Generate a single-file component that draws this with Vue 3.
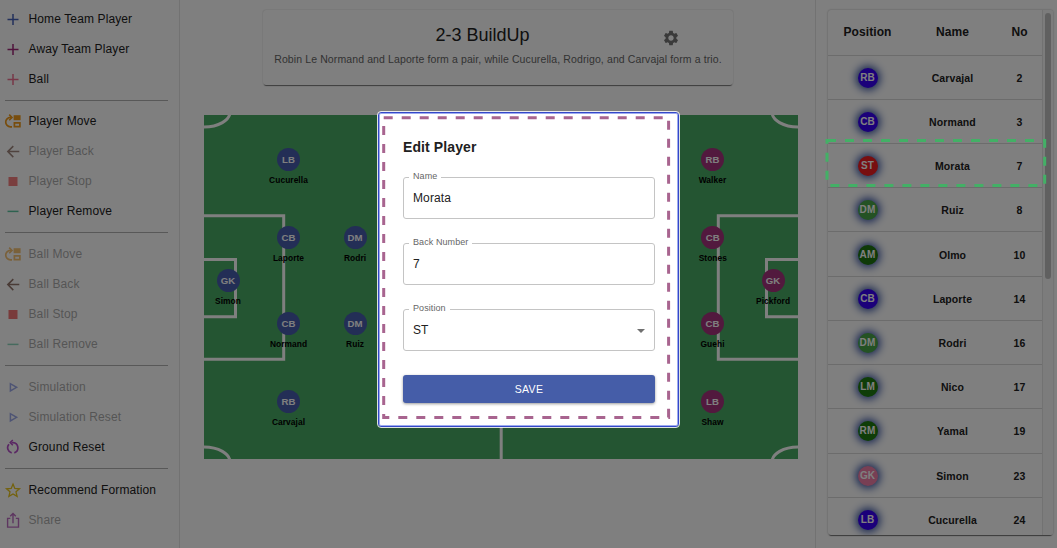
<script setup>
const groups = [
  [
    { icon: 'plus', color: '#4460b8', label: 'Home Team Player' },
    { icon: 'plus', color: '#a02678', label: 'Away Team Player' },
    { icon: 'plus', color: '#ee6f90', label: 'Ball' },
  ],
  [
    { icon: 'move', color: '#f09a1a', label: 'Player Move' },
    { icon: 'back', color: '#795548', label: 'Player Back', off: true, fade: 0.7 },
    { icon: 'stop', color: '#f04a4a', label: 'Player Stop', off: true, fade: 0.7 },
    { icon: 'minus', color: '#5cc4a0', label: 'Player Remove' },
  ],
  [
    { icon: 'move', color: '#f09a1a', label: 'Ball Move', off: true, fade: 0.6 },
    { icon: 'back', color: '#795548', label: 'Ball Back', off: true, fade: 0.8 },
    { icon: 'stop', color: '#f04a4a', label: 'Ball Stop', off: true, fade: 0.75 },
    { icon: 'minus', color: '#5cc4a0', label: 'Ball Remove', off: true, fade: 0.7 },
  ],
  [
    { icon: 'play', color: '#7385e0', label: 'Simulation', off: true, fade: 0.7 },
    { icon: 'play', color: '#7385e0', label: 'Simulation Reset', off: true, fade: 0.7 },
    { icon: 'reset', color: '#b44fc8', label: 'Ground Reset' },
  ],
  [
    { icon: 'star', color: '#e8c41c', label: 'Recommend Formation' },
    { icon: 'share', color: '#a030a8', label: 'Share', off: true, fade: 0.7 },
  ],
]

const players = [
  { x: 85, y: 44, pos: 'LB', name: 'Cucurella' },
  { x: 85, y: 122.6, pos: 'CB', name: 'Laporte' },
  { x: 151.6, y: 122.6, pos: 'DM', name: 'Rodri' },
  { x: 24.5, y: 165.5, pos: 'GK', name: 'Simon' },
  { x: 85, y: 208.4, pos: 'CB', name: 'Normand' },
  { x: 151.6, y: 208.4, pos: 'DM', name: 'Ruiz' },
  { x: 85, y: 286.4, pos: 'RB', name: 'Carvajal' },
  { x: 509, y: 44, pos: 'RB', name: 'Walker', away: true },
  { x: 509.3, y: 122.6, pos: 'CB', name: 'Stones', away: true },
  { x: 569.6, y: 165.5, pos: 'GK', name: 'Pickford', away: true },
  { x: 509, y: 208.4, pos: 'CB', name: 'Guehi', away: true },
  { x: 509, y: 286.4, pos: 'LB', name: 'Shaw', away: true },
]

const squad = [
  { pos: 'RB', name: 'Carvajal', no: 2, kind: 'df' },
  { pos: 'CB', name: 'Normand', no: 3, kind: 'df' },
  { pos: 'ST', name: 'Morata', no: 7, kind: 'fw' },
  { pos: 'DM', name: 'Ruiz', no: 8, kind: 'dm' },
  { pos: 'AM', name: 'Olmo', no: 10, kind: 'am' },
  { pos: 'CB', name: 'Laporte', no: 14, kind: 'df' },
  { pos: 'DM', name: 'Rodri', no: 16, kind: 'dm' },
  { pos: 'LM', name: 'Nico', no: 17, kind: 'mf' },
  { pos: 'RM', name: 'Yamal', no: 19, kind: 'mf' },
  { pos: 'GK', name: 'Simon', no: 23, kind: 'gk' },
  { pos: 'LB', name: 'Cucurella', no: 24, kind: 'df' },
]
</script>

<template>
  <div class="screen">
    <aside class="side">
      <ul v-for="(g, gi) in groups" :key="gi" class="group">
        <li v-for="it in g" :key="it.label" class="item" :class="{ off: it.off }">
          <svg
            class="ico"
            viewBox="0 0 18 18"
            fill="none"
            :stroke="it.color"
            stroke-width="1.5"
            :style="{ opacity: it.fade || 1 }"
          >
            <path v-if="it.icon === 'plus'" d="M3.5 9.4h11M9 3.9v11" />
            <path v-else-if="it.icon === 'minus'" d="M3.5 9.4h11" />
            <g v-else-if="it.icon === 'move'">
              <path d="M8 14.8H6.4a4.7 4.7 0 0 1 0-9.4H8" stroke-width="1.7" />
              <path d="M5.2 2.6L8 5.4 5.2 8.2" stroke-width="1.6" />
              <path d="M9.6 3.2h7v5h-7z" :fill="it.color" stroke="none" />
              <path d="M10.4 10.9h5.5v3.7h-5.5z" stroke-width="1.7" />
            </g>
            <path v-else-if="it.icon === 'back'" d="M15.3 9.6H4M9.3 4.1L3.8 9.6l5.5 5.5" />
            <path v-else-if="it.icon === 'stop'" d="M4.5 5h9v9h-9z" :fill="it.color" stroke="none" />
            <path v-else-if="it.icon === 'play'" d="M6.4 5.7v7.2l6.2-3.6z" stroke-width="1.5" />
            <g v-else-if="it.icon === 'reset'">
              <path d="M7.4 4.6H9A5.3 5.3 0 0 1 10.3 14.9" stroke-width="1.7" />
              <path d="M5 6.2A5.3 5.3 0 0 0 7.7 14.9" stroke-width="1.7" />
              <path d="M8.8 1.9L6.2 4.6l2.6 2.7" stroke-width="1.5" />
            </g>
            <path
              v-else-if="it.icon === 'star'"
              d="M9 3.1l1.8 4.3 4.7.4-3.5 3 1.1 4.6L9 13l-4.1 2.4L6 10.8l-3.5-3 4.7-.4z"
              stroke-width="1.3"
            />
            <path
              v-else
              d="M6.3 7.4H3.6v8.7h10.9V7.4h-2.7M9 12.2V2.7M6.2 5.2L9 2.4l2.8 2.8"
              stroke-width="1.4"
            />
          </svg>
          <span class="lbl">{{ it.label }}</span>
        </li>
      </ul>
    </aside>

    <main class="main">
      <section class="card">
        <div class="head">
          <h1>2-3 BuildUp</h1>
          <svg class="gear" viewBox="0 0 24 24">
            <path
              fill="#757575"
              d="M19.14 12.94c.04-.3.06-.61.06-.94 0-.32-.02-.64-.07-.94l2.03-1.58c.18-.14.23-.41.12-.61l-1.92-3.32c-.12-.22-.37-.29-.59-.22l-2.39.96c-.5-.38-1.03-.7-1.62-.94l-.36-2.54c-.04-.24-.24-.41-.48-.41h-3.84c-.24 0-.43.17-.47.41l-.36 2.54c-.59.24-1.13.57-1.62.94l-2.39-.96c-.22-.08-.47 0-.59.22L2.74 8.87c-.12.21-.08.47.12.61l2.03 1.58c-.05.3-.09.63-.09.94s.02.64.07.94l-2.03 1.58c-.18.14-.23.41-.12.61l1.92 3.32c.12.22.37.29.59.22l2.39-.96c.5.38 1.03.7 1.62.94l.36 2.54c.05.24.24.41.48.41h3.84c.24 0 .44-.17.47-.41l.36-2.54c.59-.24 1.13-.56 1.62-.94l2.39.96c.22.08.47 0 .59-.22l1.92-3.32c.12-.22.07-.47-.12-.61l-2.01-1.58zM12 15.6c-1.98 0-3.6-1.62-3.6-3.6s1.62-3.6 3.6-3.6 3.6 1.62 3.6 3.6-1.62 3.6-3.6 3.6z"
            />
          </svg>
        </div>
        <p>Robin Le Normand and Laporte form a pair, while Cucurella, Rodrigo, and Carvajal form a trio.</p>
      </section>

      <section class="pitch">
        <svg class="lines" viewBox="0 0 594 344" fill="none" stroke="#fff" stroke-width="3">
          <path d="M0 100.7h79.7v143.6H0M0 144.5h31.5v57.3H0" />
          <path d="M594 100.7h-79.7v143.6H594M594 144.5h-31.5v57.3H594" />
          <path d="M297.2 0v344" />
          <circle cx="297" cy="172" r="50" />
          <ellipse cx="0" cy="-3" rx="26" ry="15" />
          <ellipse cx="594" cy="-3" rx="26" ry="15" />
          <ellipse cx="0" cy="347" rx="26" ry="15" />
          <ellipse cx="594" cy="347" rx="26" ry="15" />
        </svg>
        <div
          v-for="p in players"
          :key="p.name"
          class="player"
          :class="{ away: p.away }"
          :style="{ left: p.x + 'px', top: p.y + 'px' }"
        >
          <b>{{ p.pos }}</b>
          <span>{{ p.name }}</span>
        </div>
      </section>
    </main>

    <aside class="right">
      <div class="panel">
        <div class="table">
          <div class="row th"><span>Position</span><span>Name</span><span>No</span></div>
          <div v-for="s in squad" :key="s.name" class="row">
            <span><i class="av" :class="s.kind">{{ s.pos }}</i></span>
            <span>{{ s.name }}</span>
            <span>{{ s.no }}</span>
          </div>
        </div>
        <div class="track"><div class="thumb"></div></div>
      </div>
    </aside>

    <div class="backdrop">
      <form class="modal" @submit.prevent>
        <h2>Edit Player</h2>
        <div class="field"><label>Name</label>Morata</div>
        <div class="field"><label>Back Number</label>7</div>
        <div class="field">
          <label>Position</label>ST
          <svg class="caret" viewBox="0 0 8 4"><path d="M0 0h8L4 4z" fill="#707070" /></svg>
        </div>
        <button>SAVE</button>
      </form>
    </div>

    <svg class="marks" viewBox="0 0 1057 548" fill="none" stroke-width="3" stroke-dasharray="9 9">
      <path d="M383.7 117.7H668.6V417.5H383.7Z" stroke="#a8648f" />
      <path d="M827 140.4H1044.7V185.4H827Z" stroke="#43b066" />
    </svg>
  </div>
</template>

<style>
body {
  margin: 0;
  overflow: hidden;
}
</style>

<style scoped>
* {
  box-sizing: border-box;
}
.screen {
  position: relative;
  display: flex;
  width: 1057px;
  height: 548px;
  overflow: hidden;
  background: #fff;
  color: #212121;
  font-family: "Liberation Sans", Arial, sans-serif;
}
.side {
  width: 180px;
  border-right: 1px solid #e4e4e4;
  padding: 3.5px 11px 0 5px;
}
.group {
  list-style: none;
  margin: 0;
  padding: 0;
}
.group + .group {
  margin-top: 6.2px;
  padding-top: 5.6px;
  border-top: 1px solid #b0b0b0;
}
.item {
  display: flex;
  align-items: center;
  height: 30px;
  font-size: 12px;
  letter-spacing: 0.12px;
  white-space: nowrap;
}
.ico {
  width: 18px;
  height: 18px;
  margin: 0 6.5px 0 -1px;
  flex: none;
}
.off .lbl {
  opacity: 0.38;
}
.main {
  width: 635px;
  display: flex;
  flex-direction: column;
  align-items: center;
  padding-top: 10px;
}
.card {
  width: 470px;
  height: 75px;
  margin-left: 1px;
  border-radius: 3px;
  box-shadow: 0 1.5px 1px -1px rgba(0, 0, 0, 0.5), 0 0 1.5px rgba(0, 0, 0, 0.25);
}
.head {
  display: grid;
  grid-template-columns: 172.5px auto 1fr;
  align-items: center;
  padding-top: 13px;
  height: 38px;
}
h1 {
  grid-column: 2;
  margin: 0 30px 4px 0;
  font-size: 18px;
  font-weight: 400;
  line-height: 24px;
}
.gear {
  grid-column: 3;
  width: 18px;
  height: 18px;
  margin: 2px 0 0 102px;
}
p {
  margin: 4px 0 0;
  text-align: center;
  font-size: 10.5px;
  line-height: 15px;
  letter-spacing: 0.112px;
  color: #666;
  white-space: nowrap;
}
.pitch {
  position: relative;
  width: 594px;
  height: 344px;
  margin: 30px 0 0 6px;
  background: #48aa64;
}
.lines {
  display: block;
  width: 594px;
  height: 344px;
}
.player {
  position: absolute;
  width: 80px;
  margin: -11.5px 0 0 -40px;
  display: flex;
  flex-direction: column;
  align-items: center;
}
.player b {
  width: 23px;
  height: 23px;
  border-radius: 50%;
  background: #465cac;
  color: #fff;
  font-size: 9.6px;
  line-height: 23px;
  text-align: center;
  letter-spacing: 0.1px;
}
.player.away b {
  background: #a4327c;
}
.player span {
  margin-top: 4px;
  color: #000;
  font-size: 8.4px;
  font-weight: 700;
  line-height: 10px;
  letter-spacing: 0.07px;
}
.right {
  flex: 1;
  border-left: 1px solid #e4e4e4;
  padding: 10px 4px 0 11.5px;
}
.panel {
  display: flex;
  height: 525px;
  overflow: hidden;
  border-radius: 3px;
  box-shadow: 0 1.5px 1px -1px rgba(0, 0, 0, 0.5), 0 0 2px rgba(0, 0, 0, 0.35);
}
.table {
  width: 214px;
}
.row {
  display: grid;
  grid-template-columns: 80px 90px 44px;
  align-items: center;
  height: 44.22px;
  padding-top: 1px;
  border-bottom: 1px solid #d8d8d8;
  text-align: center;
  font-size: 10.5px;
  font-weight: 700;
  letter-spacing: 0.1px;
}
.row.th {
  height: 45.6px;
  padding-top: 0;
  font-size: 12px;
}
.av {
  display: block;
  width: 20px;
  height: 20px;
  margin: 0 auto;
  border-radius: 50%;
  color: #fff;
  font-size: 10px;
  font-style: normal;
  line-height: 20px;
  letter-spacing: 0.1px;
  box-shadow: 0 0 8px 2px #2a489f;
}
.df { background: #3600f4; }
.fw { background: #f01c20; }
.dm { background: #48a548; }
.am { background: #1e7410; }
.mf { background: #1f7a10; }
.gk { background: #f07fa8; }
.track {
  flex: 1;
  padding: 2.5px 0 0 2px;
  background: #f9f9f9;
  border-left: 1px solid #e4e4e4;
}
.thumb {
  width: 6px;
  height: 266px;
  border-radius: 3px;
  background: #c1c1c1;
}
.backdrop {
  position: absolute;
  inset: 0;
  background: rgba(0, 0, 0, 0.5);
  display: flex;
  align-items: flex-start;
  justify-content: center;
}
.modal {
  width: 301px;
  height: 315px;
  margin-top: 112px;
  padding: 24px 23px 0 24px;
  border: 1px solid #3448c8;
  border-radius: 3px;
  background: #fff;
  outline: 1px solid rgba(255, 255, 255, 0.85);
  box-shadow: inset 0 0 0 1px rgba(60, 85, 225, 0.5);
}
h2 {
  margin: 0;
  font-size: 14px;
  line-height: 20px;
  letter-spacing: 0.1px;
}
.field {
  position: relative;
  height: 42px;
  margin-top: 24px;
  padding-left: 9px;
  border: 1px solid #c4c4c4;
  border-radius: 3px;
  font-size: 12px;
  line-height: 40px;
  letter-spacing: 0.11px;
}
h2 + .field {
  margin-top: 20px;
}
.field label {
  position: absolute;
  left: 5px;
  top: -8px;
  padding: 0 4px;
  background: #fff;
  color: #666;
  font-size: 9px;
  line-height: 12px;
  letter-spacing: 0.08px;
}
.caret {
  position: absolute;
  right: 9.5px;
  top: 19px;
  width: 8px;
  height: 4px;
}
button {
  display: block;
  width: 100%;
  height: 28px;
  margin-top: 24px;
  padding: 0;
  border: 0;
  border-radius: 3px;
  background: #455da8;
  color: #fff;
  font-family: inherit;
  font-size: 10.5px;
  letter-spacing: 0.3px;
  box-shadow: 0 1px 3px rgba(0, 0, 0, 0.4);
}
.marks {
  position: absolute;
  inset: 0;
  width: 1057px;
  height: 548px;
  pointer-events: none;
}
</style>
